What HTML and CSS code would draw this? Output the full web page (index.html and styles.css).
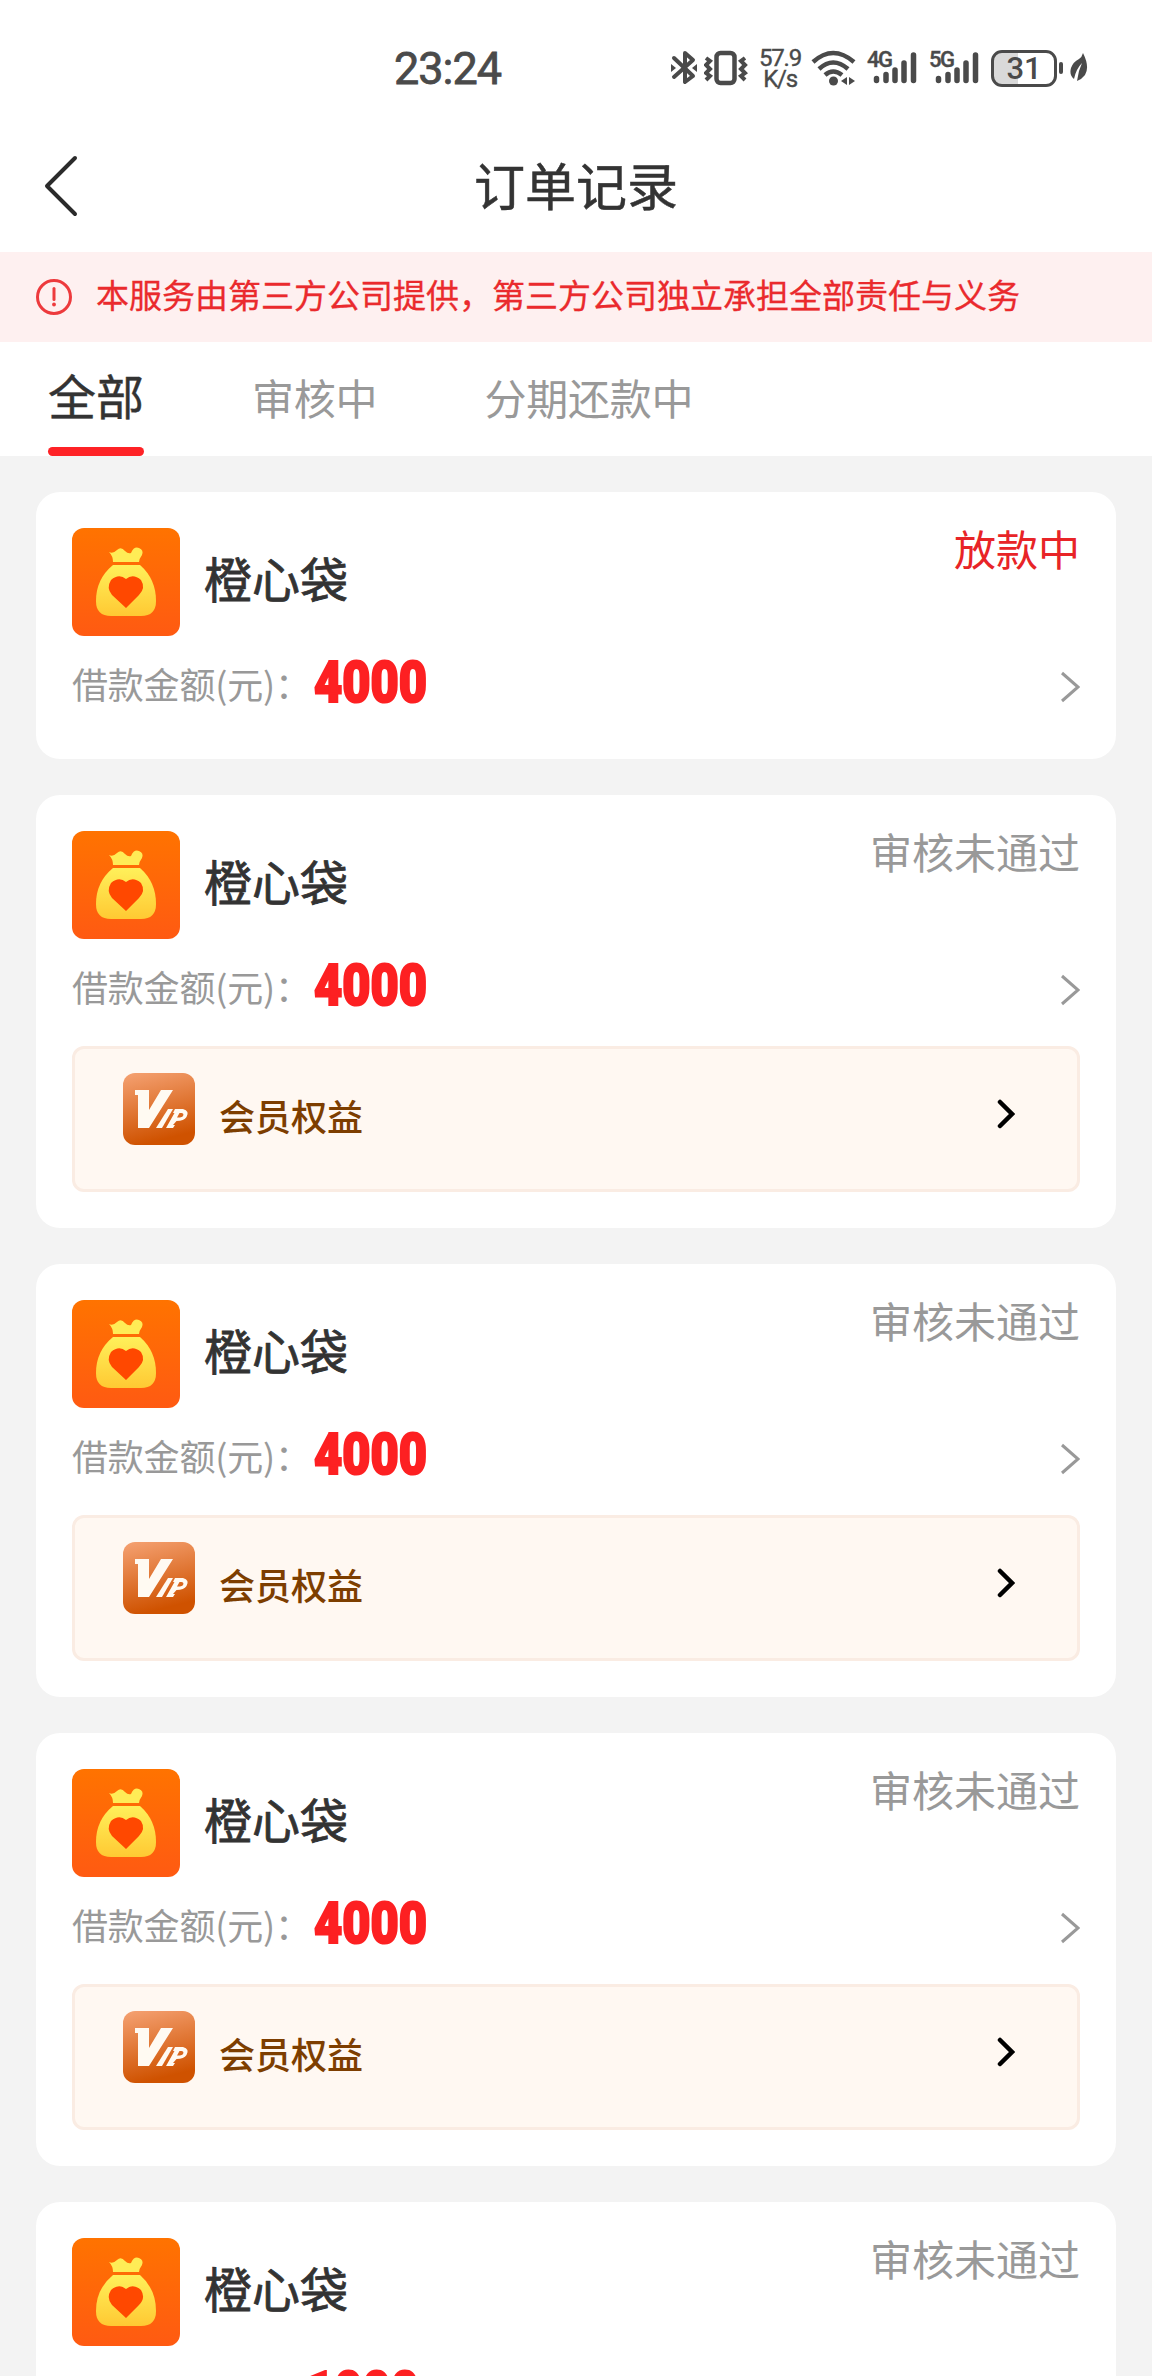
FILE: index.html
```html
<!DOCTYPE html>
<html lang="zh-CN">
<head>
<meta charset="utf-8">
<title>订单记录</title>
<link rel="stylesheet" href="styles.css">
</head>
<body>
<svg width="0" height="0" class="defs">
  <defs>
    <linearGradient id="orange" x1="0" y1="0" x2="0" y2="1"><stop offset="0" stop-color="#ff7300"/><stop offset="1" stop-color="#ff5a12"/></linearGradient>
    <linearGradient id="gold" x1="0" y1="0" x2="0" y2="1"><stop offset="0" stop-color="#fff05a"/><stop offset="1" stop-color="#ffc933"/></linearGradient>
    <linearGradient id="copper" x1="0" y1="0" x2="0.25" y2="1"><stop offset="0" stop-color="#f5a273"/><stop offset="1" stop-color="#cf5200"/></linearGradient>
  </defs>
  <symbol id="bag" viewBox="0 0 108 108">
    <rect width="108" height="108" rx="12" fill="url(#orange)"/>
    <path d="M37 24Q41 26 45 22Q49 18 53 23Q56 26 59 25Q62 18 67 20Q72 22 70 27Q67 31 67 34H41Q41 28 37 24Z" fill="#ffec56"/>
    <path d="M41 37H68Q84 51 84 73Q84 88 69 88H39Q24 88 24 73Q24 51 41 37Z" fill="url(#gold)"/>
    <path d="M54 80L40 67Q34 60 39 52Q47 45 54 51Q61 45 69 52Q74 60 67 67Z" fill="#ff4800"/>
  </symbol>
  <symbol id="vip" viewBox="0 0 72 72">
    <rect width="72" height="72" rx="12" fill="url(#copper)"/>
    <path d="M12 17H26V37L38 17H50L26 55H15V22H12Z" fill="#fffaf2"/>
    <path d="M45 36H50L39 55H33Z" fill="#fffaf2"/>
    <path d="M52 36H60Q67 38 63.500 44Q61 48 53.500 48L50 52H52L50 55H43L51.500 40H50ZM56.500 40L54 44.500H57Q60 44 60.500 42Q60.500 40 58.500 40Z" fill="#fffaf2" fill-rule="evenodd"/>
  </symbol>
  <symbol id="signal" viewBox="0 0 50 36">
    <path d="M9.500 28.500V30.500M19 24.500V30.500M28 20V30.500M37 13V30.500M46.500 5V30.500" fill="none" stroke="#4a4a4a" stroke-width="5.500" stroke-linecap="round"/>
  </symbol>
</svg>
<header class="status-bar">
  <span class="clock">23:24</span>
  <div class="indicators">
    <svg class="bluetooth" width="26" height="36" viewBox="0 0 26 36" fill="none" stroke="#4a4a4a" stroke-width="4" stroke-linejoin="round" stroke-linecap="round"><path d="M3 8L22 26L14 32V21M14 16V3L22 10L3 27"/><path d="M0 14V22L5 18ZM26 14V22L21 18Z" fill="#4a4a4a" stroke="none"/></svg>
    <svg class="vibrate" width="44" height="36" viewBox="0 0 44 36" fill="none" stroke="#4a4a4a" stroke-width="4.500"><rect x="12.500" y="3" width="18" height="30" rx="4"/><path d="M2 8l4 3-4 4 4 4-4 4 4 3-4 4M41 8l-4 3 4 4-4 4 4 4-4 3 4 4" stroke-width="4"/></svg>
    <div class="speed"><span>57.9</span><span>K/s</span></div>
    <svg class="wifi" width="46" height="36" viewBox="0 0 46 36" fill="none" stroke="#4a4a4a" stroke-width="4.500"><path d="M2 12Q22-6 43 12M8 19Q22 6 37 19M14 25Q22 18 31 25"/><circle cx="22.500" cy="31" r="4.500" fill="#4a4a4a" stroke="none"/><path d="M36 27V35L30 31ZM38 27V35L44 31Z" fill="#4a4a4a" stroke="none"/></svg>
    <div class="cell"><span>4G</span><svg width="50" height="36"><use href="#signal"/></svg></div>
    <div class="cell"><span>5G</span><svg width="50" height="36"><use href="#signal"/></svg></div>
    <div class="battery">31</div>
    <svg class="tip" width="4" height="12"><rect width="4" height="12" rx="2" fill="#4a4a4a"/></svg>
    <svg class="leaf" width="18" height="30" viewBox="0 0 18 30"><path d="M13 0Q20 14 15 22Q12 26 7 28L9 18L12 10Q6 16 4 26Q-1 22 1 15Q3 9 9 6Q12 4 13 0Z" fill="#4a4a4a"/></svg>
  </div>
</header>
<nav class="title-bar">
  <svg class="back" width="36" height="62" viewBox="0 0 36 62"><path d="M31 3L3 31L31 59" fill="none" stroke="#2b2b2b" stroke-width="4" stroke-linecap="round" stroke-linejoin="round"/></svg>
  <h1>订单记录</h1>
</nav>
<div class="notice">
  <svg width="36" height="36" viewBox="0 0 36 36"><circle cx="18" cy="18" r="16.500" fill="none" stroke="#ed3a3d" stroke-width="3"/><path d="M18 9.500V20.500" stroke="#ed3a3d" stroke-width="3" stroke-linecap="round"/><circle cx="18" cy="25.500" r="1.900" fill="#ed3a3d"/></svg>
  <span>本服务由第三方公司提供，第三方公司独立承担全部责任与义务</span>
</div>
<div class="tabs"><span class="tab active">全部</span><span class="tab">审核中</span><span class="tab">分期还款中</span></div>
<main class="orders" id="orders"></main>
<script src="orders.js"></script>
</body>
</html>
```
FILE: styles.css
```css
* { box-sizing: border-box; }
body { margin: 0; width: 1152px; height: 2376px; overflow: hidden; background: #f3f3f3; color: #333; font-family: "Noto Sans CJK SC", sans-serif; }
svg { display: block; flex: none; }
.defs { position: absolute; }
.status-bar { height: 126px; background: #fff; display: flex; align-items: flex-start; padding: 0 64px 0 394px; justify-content: space-between; color: #4a4a4a; }
.clock { font: 400 45px/44px Roboto, sans-serif; margin-top: 47px; letter-spacing: -1px; -webkit-text-stroke: .8px #4a4a4a; }
.indicators { display: flex; margin-top: 50px; height: 36px; align-items: center; }
.bluetooth { margin-right: 7px; }
.vibrate { margin-right: 11px; }
.speed { width: 42px; display: flex; flex-direction: column; align-items: center; font: 24px/21px Roboto, sans-serif; letter-spacing: -1.2px; -webkit-text-stroke: .4px #4a4a4a; margin-right: 10px; padding-top: 1px; }
.wifi { margin-right: 10px; }
.cell { position: relative; margin-right: 12px; }
.cell span { position: absolute; left: 0; top: 0; font: 500 22px/19px Roboto, sans-serif; letter-spacing: -1.5px; -webkit-text-stroke: .4px #4a4a4a; }
.battery { width: 66px; height: 37px; border: 3px solid #4a4a4a; border-radius: 11px; background: linear-gradient(90deg, #d9d9d9 40%, #fff 40%); font: 500 31px/32px Roboto, sans-serif; text-align: center; }
.tip { margin: 0 7px 0 2px; }
.title-bar { height: 126px; background: #fff; display: grid; grid-template-columns: 1fr auto 1fr; align-items: center; padding: 0 44px 6px; }
.title-bar h1 { margin: 0; padding-bottom: 5px; font-size: 51px; line-height: 60px; font-weight: 400; -webkit-text-stroke: .5px #333; }
.notice { height: 90px; background: #fef0f0; color: #ea2a2d; display: flex; align-items: center; gap: 24px; padding: 0 36px; font-size: 33px; line-height: 40px; -webkit-text-stroke: .3px #ea2a2d; }
.notice span { padding-bottom: 6px; }
.tabs { height: 114px; background: #fff; display: flex; gap: 107px; padding: 0 48px; color: #999; font-size: 42px; line-height: 110px; }
.tab { letter-spacing: -.2px; }
.tab.active { display: flex; flex-direction: column; color: #333; font-size: 48px; line-height: 105px; letter-spacing: 0; margin-right: 1px; -webkit-text-stroke: .4px #333; }
.tab.active::after { content: ""; height: 9px; border-radius: 5px; background: #fe2226; }
.orders { display: flex; flex-direction: column; gap: 36px; padding: 36px; }
.card { flex: none; background: #fff; border-radius: 24px; padding: 36px 36px 48px; }
.card.has-benefit { padding-bottom: 36px; }
.brand-row { display: flex; height: 108px; align-items: flex-start; }
.name { font-size: 48px; line-height: 99px; margin-left: 24px; flex: 1; -webkit-text-stroke: .8px #333; }
.state { font-size: 42px; line-height: 40px; color: #999; }
.state.paying { color: #e82427; }
.amount-row { display: flex; height: 51px; margin-top: 24px; align-items: center; }
.amount-row svg { margin-top: 2px; }
.label { font-size: 36px; line-height: 46px; padding-bottom: 5px; color: #999; letter-spacing: -.2px; }
.amount { flex: 1; padding-bottom: 6px; }
.amount b { display: inline-block; font: 900 57px/51px Roboto, sans-serif; color: #fd2022; -webkit-text-stroke: 2.2px #fd2022; transform: scaleX(.855); transform-origin: 0 50%; margin-left: 3px; }
.amount.narrow b { margin-left: -5px; }
.benefit { margin-top: 32px; height: 146px; border: 3px solid #faece3; border-radius: 12px; background: #fff8f2; display: flex; padding: 24px 62px 0 48px; }
.benefit span { flex: 1; margin: 15px 0 0 24px; font-size: 36px; line-height: 54px; height: 54px; color: #7d3e00; font-weight: 500; }
.benefit .go { margin-top: 26px; }
```
FILE: orders.js
```js
const orders = [
  { state: '放款中', paying: true, amount: 4000 },
  { state: '审核未通过', amount: 4000, benefit: true },
  { state: '审核未通过', amount: 4000, benefit: true },
  { state: '审核未通过', amount: 4000, benefit: true },
  { state: '审核未通过', amount: 1000, benefit: true }
];

document.getElementById('orders').innerHTML = orders.map(o => `
  <section class="card ${o.benefit ? 'has-benefit' : ''}">
    <div class="brand-row">
      <svg width="108" height="108"><use href="#bag"/></svg>
      <span class="name">橙心袋</span>
      <span class="state ${o.paying ? 'paying' : ''}">${o.state}</span>
    </div>
    <div class="amount-row">
      <span class="label">借款金额(元)：</span>
      <span class="amount ${String(o.amount)[0] === '1' ? 'narrow' : ''}"><b>${o.amount}</b></span>
      <svg width="20" height="32" viewBox="0 0 20 32"><path d="M2 2L18 16L2 30" fill="none" stroke="#999" stroke-width="3"/></svg>
    </div>
    ${o.benefit ? `<div class="benefit">
      <svg width="72" height="72"><use href="#vip"/></svg>
      <span>会员权益</span>
      <svg class="go" width="18" height="30" viewBox="0 0 18 30"><path d="M3 3L15 15L3 27" fill="none" stroke="#000" stroke-width="4.500" stroke-linecap="round"/></svg>
    </div>` : ''}
  </section>`).join('');
```
